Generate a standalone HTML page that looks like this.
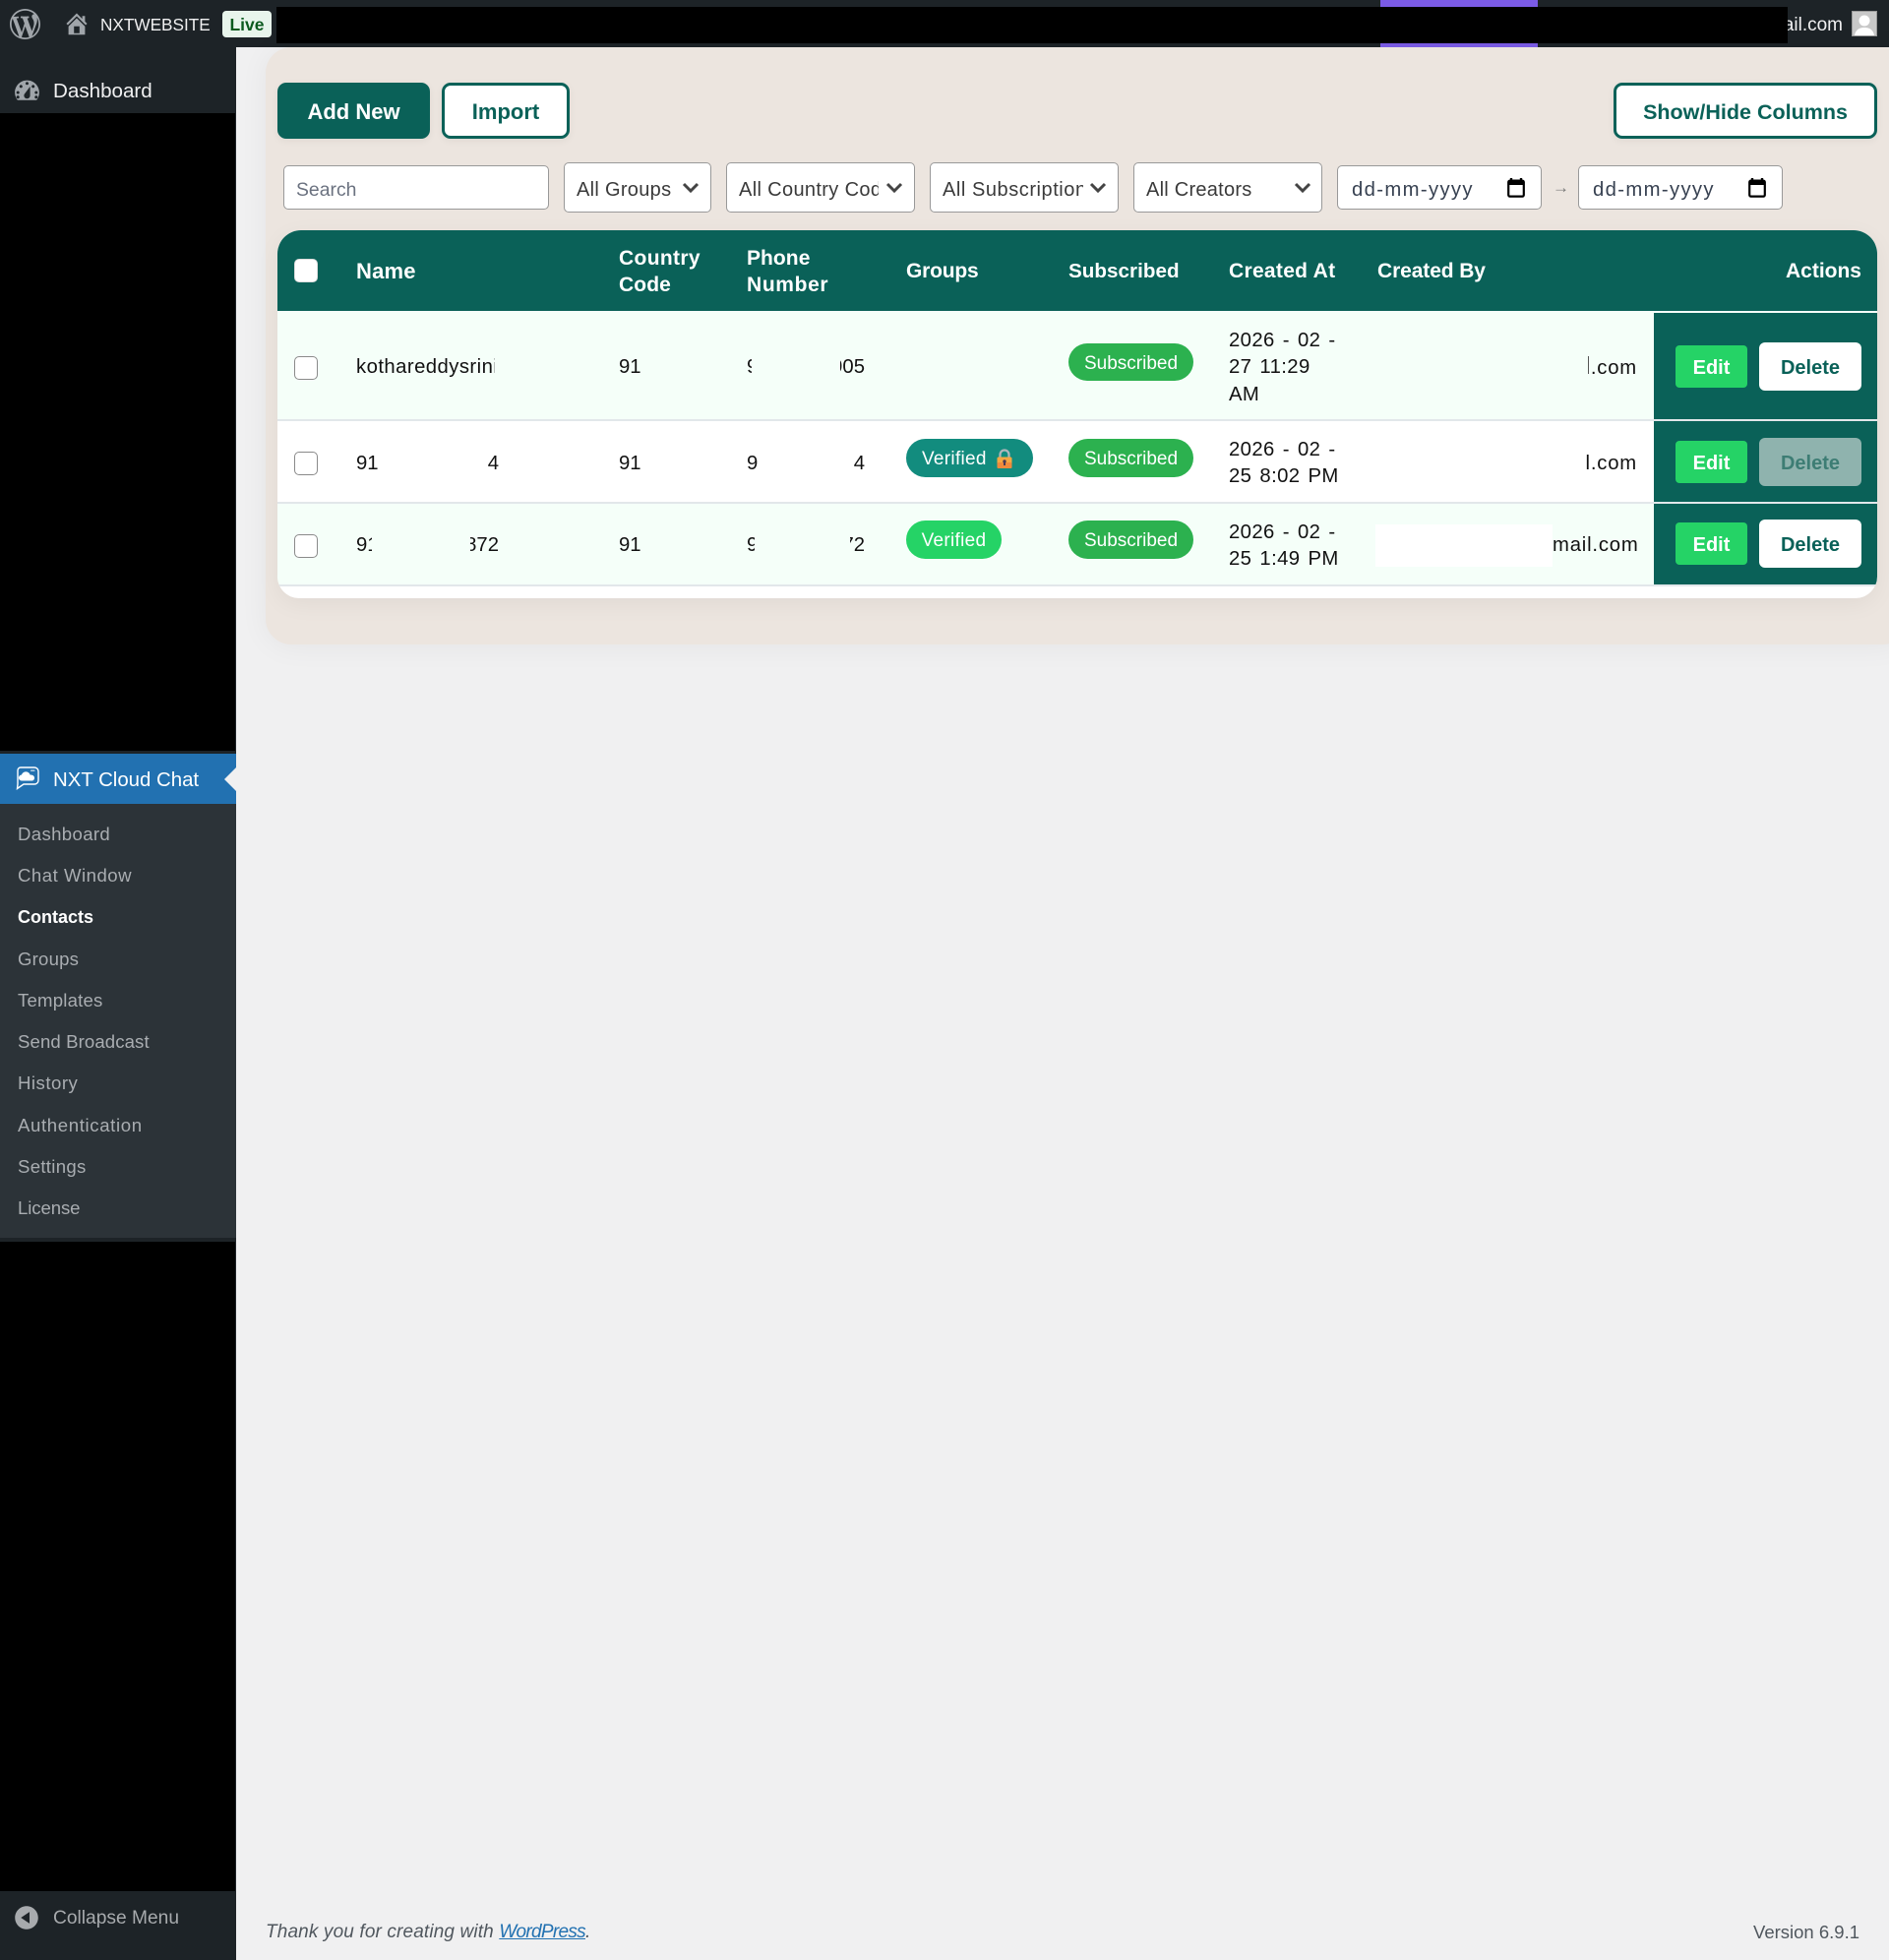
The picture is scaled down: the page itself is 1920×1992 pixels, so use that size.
<!DOCTYPE html>
<html lang="en"><head><meta charset="utf-8"><title>Contacts</title>
<style>
html,body{margin:0;padding:0;width:1920px;height:1992px;overflow:hidden;background:#f0f0f1;font-family:"Liberation Sans",sans-serif}
.a{position:absolute;box-sizing:border-box}
.t{position:absolute;white-space:nowrap;line-height:24px;height:24px;transform:translateY(1px)}
.clip{overflow:hidden}
.th{color:#fff;font-weight:bold;font-size:21px;letter-spacing:-.2px}
.td{color:#111;font-size:20.3px}
.dt{letter-spacing:.4px;word-spacing:2px}
.em{letter-spacing:.8px}
.sub{color:#a9adb1;font-size:18.6px;left:18px}
.btn{position:absolute;box-sizing:border-box;text-align:center;font-weight:bold;padding-top:1px}
.field{position:absolute;box-sizing:border-box;background:#fff;border:1px solid #999;border-radius:5px}
.cb{position:absolute;box-sizing:border-box;width:24px;height:24px;border:1.5px solid #8a8a8a;border-radius:5px;background:#fff}
.badge{position:absolute;box-sizing:border-box;height:39px;line-height:38px;padding-top:1.5px;border-radius:20px;color:#fff;font-size:19px;text-align:center}
</style></head><body>

<!-- sidebar -->
<div class="a" style="left:0;top:0;width:240px;height:1992px;background:#1d2327"></div>
<div class="a" style="left:0;top:115px;width:239px;height:648px;background:#000"></div>
<div class="a" style="left:0;top:766px;width:240px;height:51px;background:#2271b1"></div>
<div class="a" style="left:0;top:817px;width:240px;height:441px;background:#2c3338"></div>
<div class="a" style="left:0;top:1262px;width:239px;height:660px;background:#000"></div>

<!-- admin bar -->
<div class="a" style="left:0;top:0;width:1920px;height:48px;background:#1d2327"></div>
<div class="a" style="left:1403px;top:0;width:160px;height:48px;background:#7b5be6"></div>
<div class="a" style="left:281px;top:7px;width:1536px;height:37px;background:#000"></div>
<svg class="a" style="left:10px;top:9px" width="31" height="31" viewBox="0 0 20 20"><path fill="#a0a5aa" d="M20 10c0-5.51-4.49-10-10-10C4.48 0 0 4.49 0 10c0 5.52 4.48 10 10 10 5.51 0 10-4.48 10-10zM7.78 15.37L4.37 6.22c.55-.02 1.17-.08 1.17-.08.5-.06.44-1.13-.06-1.11 0 0-1.45.11-2.37.11-.18 0-.37 0-.58-.01C4.12 2.69 6.87 1.11 10 1.11c2.33 0 4.45.87 6.05 2.34-.68-.11-1.65.39-1.65 1.58 0 .74.45 1.36.9 2.1.35.61.55 1.36.55 2.46 0 1.49-1.4 5-1.4 5l-3.03-8.37c.54-.02.82-.17.82-.17.5-.05.44-1.25-.06-1.22 0 0-1.44.12-2.38.12-.87 0-2.33-.12-2.33-.12-.5-.03-.56 1.2-.06 1.22l.92.08 1.26 3.41zM17.41 10c.24-.64.74-1.87.43-4.25.7 1.29 1.05 2.71 1.05 4.25 0 3.29-1.73 6.24-4.4 7.78.97-2.59 1.94-5.2 2.92-7.78zM6.1 18.09C3.12 16.65 1.11 13.53 1.11 10c0-1.3.23-2.48.72-3.59C3.25 10.3 4.67 14.2 6.1 18.09zm4.03-6.63l2.58 6.98c-.86.29-1.76.45-2.71.45-.79 0-1.57-.11-2.29-.33.81-2.38 1.62-4.74 2.42-7.1z"/></svg>
<svg class="a" style="left:64px;top:10px" width="28" height="28" viewBox="0 0 20 20"><path fill="#a0a5aa" d="M16 8.5l1.53 1.53-1.06 1.06L10 4.62l-6.47 6.47-1.06-1.06L10 2.5l4 4v-2h2v4zm-6-2.46l6 5.99V18H4v-5.97zM12 17v-5H8v5h4z"/></svg>
<div class="t" style="left:102px;top:12px;color:#f0f0f1;font-size:17.2px">NXTWEBSITE</div>
<div class="a" style="left:226px;top:11px;width:50px;height:27px;background:#e8f5ec;border-radius:4px;color:#0b5a1e;font-size:17.5px;font-weight:bold;text-align:center;line-height:28px">Live</div>
<div class="a clip" style="left:1817px;top:14px;width:56px;height:24px;line-height:24px;color:#f0f0f1;font-size:19px;text-align:right;direction:rtl"><span style="direction:ltr;unicode-bidi:bidi-override">mail.com</span></div>
<svg class="a" style="left:1882px;top:11px" width="26" height="26" viewBox="0 0 26 26"><rect width="26" height="26" fill="#c8c8c8"/><rect x=".5" y=".5" width="25" height="25" fill="none" stroke="#9a9a9a"/><circle cx="13" cy="10" r="5.5" fill="#fff"/><path d="M3 25c1-6 5-8 10-8s9 2 10 8z" fill="#fff"/></svg>

<!-- sidebar items -->
<svg class="a" style="left:12px;top:77px" width="31" height="31" viewBox="0 0 20 20"><path fill="#a0a5aa" d="M3.76 16h12.48c1.1-1.37 1.76-3.11 1.76-5 0-4.42-3.58-8-8-8s-8 3.58-8 8c0 1.89.66 3.63 1.76 5zM10 4c.55 0 1 .45 1 1s-.45 1-1 1-1-.45-1-1 .45-1 1-1zM6 6c.55 0 1 .45 1 1s-.45 1-1 1-1-.45-1-1 .45-1 1-1zm8 0c.55 0 1 .45 1 1s-.45 1-1 1-1-.45-1-1 .45-1 1-1zm-5.37 5.55L12 7v6c0 1.1-.9 2-2 2s-2-.9-2-2c0-.57.24-1.08.63-1.45zM4 10c.55 0 1 .45 1 1s-.45 1-1 1-1-.45-1-1 .45-1 1-1zm12 0c.55 0 1 .45 1 1s-.45 1-1 1-1-.45-1-1 .45-1 1-1zm-12 3c.55 0 1 .45 1 1s-.45 1-1 1-1-.45-1-1 .45-1 1-1zm12 0c.55 0 1 .45 1 1s-.45 1-1 1-1-.45-1-1 .45-1 1-1z"/></svg>
<div class="t" style="left:54px;top:80px;color:#f0f0f1;font-size:20.6px">Dashboard</div>
<svg class="a" style="left:15px;top:778px" width="26" height="26" viewBox="0 0 26 26"><path d="M6 2h14a4 4 0 0 1 4 4v9a4 4 0 0 1-4 4H9l-6.5 4.5L3 19V5a3 3 0 0 1 3-3z" fill="none" stroke="#fff" stroke-width="1.4"/><path d="M7 15.5a3 3 0 0 1 0-6c.7-2.6 4-4.2 6.8-2.4 1 .6 1.6 1.5 1.8 2.5 2.6-.3 4.4 1.2 4.4 3.1 0 1.6-1.2 2.8-3 2.8z" fill="#fff"/><rect x="16" y="4.5" width="4.5" height="1.4" rx=".7" fill="#bcd6ec"/></svg>
<div class="t" style="left:54px;top:780px;color:#fff;font-size:20.4px">NXT Cloud Chat</div>
<div class="a" style="left:228px;top:780px;width:0;height:0;border-top:12px solid transparent;border-bottom:12px solid transparent;border-right:12px solid #f0f0f1"></div>
<div class="t sub" style="top:835px;letter-spacing:.35px">Dashboard</div>
<div class="t sub" style="top:877px;letter-spacing:.5px">Chat Window</div>
<div class="t" style="left:18px;top:919px;color:#fff;font-size:18px;font-weight:bold">Contacts</div>
<div class="t sub" style="top:962px;letter-spacing:.2px">Groups</div>
<div class="t sub" style="top:1004px;letter-spacing:.2px">Templates</div>
<div class="t sub" style="top:1046px;letter-spacing:.1px">Send Broadcast</div>
<div class="t sub" style="top:1088px;letter-spacing:.5px">History</div>
<div class="t sub" style="top:1131px;letter-spacing:.63px">Authentication</div>
<div class="t sub" style="top:1173px;letter-spacing:.3px">Settings</div>
<div class="t sub" style="top:1215px;letter-spacing:-.1px">License</div>
<svg class="a" style="left:12px;top:1934px" width="30" height="30" viewBox="0 0 20 20"><path fill="#a7aaad" d="M10 2.16c4.33 0 7.84 3.51 7.84 7.84s-3.51 7.84-7.84 7.84S2.16 14.33 2.16 10 5.71 2.16 10 2.16zm2 11.72V6.12L6.18 9.97z"/></svg>
<div class="t" style="left:54px;top:1937px;color:#a7aaad;font-size:19.2px">Collapse Menu</div>

<!-- panel -->
<div class="a" style="left:270px;top:48px;width:1670px;height:607px;background:#ece5df;border-radius:26px;box-shadow:0 2px 30px rgba(0,0,0,.05)"></div>

<!-- toolbar -->
<div class="btn" style="left:282px;top:84px;width:155px;height:57px;background:#0a6158;border-radius:9px;color:#fff;font-size:22px;line-height:58px;box-shadow:0 2px 8px rgba(0,0,0,.06)">Add New</div>
<div class="btn" style="left:449px;top:84px;width:130px;height:57px;background:#fff;border:3px solid #0a6158;border-radius:9px;color:#0a6158;font-size:22px;line-height:52px;box-shadow:0 2px 8px rgba(0,0,0,.06)">Import</div>
<div class="btn" style="left:1640px;top:84px;width:268px;height:57px;background:#fff;border:3px solid #0a6158;border-radius:9px;color:#0a6158;font-size:21.5px;line-height:52px;box-shadow:0 2px 8px rgba(0,0,0,.06)">Show/Hide Columns</div>

<div class="field" style="left:288px;top:168px;width:270px;height:45px"></div>
<div class="t" style="left:301px;top:180px;color:#6b7280;font-size:19.4px">Search</div>

<div class="field" style="left:573px;top:165px;width:150px;height:51px"></div>
<div class="t" style="left:586px;top:180px;color:#3a3a3a;font-size:20px;letter-spacing:.3px">All Groups</div>
<div class="field" style="left:738px;top:165px;width:192px;height:51px"></div>
<div class="t clip" style="left:751px;top:180px;width:142px;color:#3a3a3a;font-size:20px;letter-spacing:.35px">All Country Code</div>
<div class="field" style="left:945px;top:165px;width:192px;height:51px"></div>
<div class="t clip" style="left:958px;top:180px;width:143px;color:#3a3a3a;font-size:20px;letter-spacing:.55px">All Subscription</div>
<div class="field" style="left:1152px;top:165px;width:192px;height:51px"></div>
<div class="t" style="left:1165px;top:180px;color:#3a3a3a;font-size:20px;letter-spacing:.25px">All Creators</div>
<svg class="a" style="left:0;top:0" width="1400" height="220" fill="none" stroke="#444" stroke-width="3"><path d="M695 187l7 7 7-7M902 187l7 7 7-7M1109 187l7 7 7-7M1317 187l7 7 7-7"/></svg>

<div class="field" style="left:1359px;top:168px;width:208px;height:45px"></div>
<div class="t" style="left:1374px;top:180px;color:#374151;font-size:20.3px;letter-spacing:1.35px">dd-mm-yyyy</div>
<svg class="a" style="left:1532px;top:181px" width="18" height="20" viewBox="0 0 18 20"><path d="M4 0v3M14 0v3" stroke="#000" stroke-width="2.4"/><rect x="1.2" y="2.6" width="15.6" height="16" rx="1.5" fill="none" stroke="#000" stroke-width="2.2"/><rect x="1.2" y="2.6" width="15.6" height="4.4" fill="#000"/></svg>
<div class="t" style="left:1578px;top:178px;color:#777;font-size:17px">→</div>
<div class="field" style="left:1604px;top:168px;width:208px;height:45px"></div>
<div class="t" style="left:1619px;top:180px;color:#374151;font-size:20.3px;letter-spacing:1.35px">dd-mm-yyyy</div>
<svg class="a" style="left:1777px;top:181px" width="18" height="20" viewBox="0 0 18 20"><path d="M4 0v3M14 0v3" stroke="#000" stroke-width="2.4"/><rect x="1.2" y="2.6" width="15.6" height="16" rx="1.5" fill="none" stroke="#000" stroke-width="2.2"/><rect x="1.2" y="2.6" width="15.6" height="4.4" fill="#000"/></svg>

<!-- table -->
<div class="a" style="left:282px;top:234px;width:1626px;height:374px;background:#fff;border-radius:24px 24px 22px 22px;box-shadow:0 6px 24px rgba(0,0,0,.05);overflow:hidden">
  <div class="a" style="left:0;top:0;width:1626px;height:82px;background:#0a6158"></div>
  <div class="a" style="left:0;top:82px;width:1626px;height:110px;background:#f5fff9"></div>
  <div class="a" style="left:0;top:192px;width:1626px;height:2px;background:#e2e7ea"></div>
  <div class="a" style="left:0;top:276px;width:1626px;height:2px;background:#e2e7ea"></div>
  <div class="a" style="left:0;top:278px;width:1626px;height:82px;background:#f5fff9"></div>
  <div class="a" style="left:0;top:360px;width:1626px;height:2px;background:#e2e7ea"></div>
  <div class="a" style="left:1399px;top:84px;width:227px;height:108px;background:#0a6158"></div>
  <div class="a" style="left:1399px;top:194px;width:227px;height:82px;background:#0a6158"></div>
  <div class="a" style="left:1399px;top:278px;width:227px;height:82px;background:#0a6158"></div>
</div>

<!-- header -->
<div class="cb" style="left:299px;top:263px;border-color:#ddd"></div>
<div class="t th" style="left:362px;top:263px;font-size:22px;letter-spacing:.2px">Name</div>
<div class="t th" style="left:629px;top:250px;letter-spacing:.35px">Country</div>
<div class="t th" style="left:629px;top:277px;letter-spacing:.1px">Code</div>
<div class="t th" style="left:759px;top:250px;letter-spacing:.05px">Phone</div>
<div class="t th" style="left:759px;top:277px;letter-spacing:.65px">Number</div>
<div class="t th" style="left:921px;top:263px">Groups</div>
<div class="t th" style="left:1086px;top:263px;font-size:20.6px;letter-spacing:.05px">Subscribed</div>
<div class="t th" style="left:1249px;top:263px;letter-spacing:.3px">Created At</div>
<div class="t th" style="left:1400px;top:263px;letter-spacing:-.1px">Created By</div>
<div class="t th" style="right:28px;top:263px;letter-spacing:0">Actions</div>

<!-- row 1 -->
<div class="cb" style="left:299px;top:362px"></div>
<div class="t td clip" style="left:362px;top:360px;width:141px;letter-spacing:.45px">kothareddysrinivas</div>
<div class="t td" style="left:629px;top:360px">91</div>
<div class="t td clip" style="left:759px;top:360px;width:5px">9</div>
<div class="t td clip" style="left:854px;top:360px;width:25px;direction:rtl"><span style="direction:ltr;unicode-bidi:bidi-override">905</span></div>
<div class="badge" style="left:1086px;top:349px;width:127px;height:38px;background:#2cb14f">Subscribed</div>
<div class="t td dt" style="left:1249px;top:333px">2026 - 02 -</div>
<div class="t td dt" style="left:1249px;top:360px">27 11:29</div>
<div class="t td dt" style="left:1249px;top:388px">AM</div>
<div class="t td em" style="right:256px;top:361px">.com</div>
<div class="a" style="left:1614px;top:362px;width:1px;height:18px;background:#555"></div>
<div class="btn" style="left:1703px;top:351px;width:73px;height:43px;background:#25d366;border-radius:4px;color:#fff;font-size:20px;line-height:45px">Edit</div>
<div class="btn" style="left:1788px;top:348px;width:104px;height:49px;background:#fff;border-radius:6px;color:#0a6158;font-size:20px;line-height:51px">Delete</div>

<!-- row 2 -->
<div class="cb" style="left:299px;top:459px"></div>
<div class="t td" style="left:362px;top:458px">91</div>
<div class="t td" style="right:1413px;top:458px">4</div>
<div class="t td" style="left:629px;top:458px">91</div>
<div class="t td" style="left:759px;top:458px">9</div>
<div class="t td" style="right:1041px;top:458px">4</div>
<div class="badge" style="left:921px;top:446px;width:129px;background:#128c7e;text-align:left;padding-left:16px;letter-spacing:.3px">Verified</div>
<svg class="a" style="left:1012px;top:456px" width="18" height="21" viewBox="0 0 18 21"><path d="M4.5 9V6a4.5 4.5 0 0 1 9 0v3" fill="none" stroke="#b0b6bb" stroke-width="2.2"/><rect x="1.5" y="8.5" width="15" height="11.5" rx="1.5" fill="#f5a742"/><rect x="1.5" y="14" width="15" height="6" rx="1.5" fill="#ee8a3c"/><circle cx="9" cy="13" r="1.7" fill="#4a3a55"/><rect x="8" y="13" width="2" height="4" fill="#4a3a55"/></svg>
<div class="badge" style="left:1086px;top:446px;width:127px;background:#2cb14f">Subscribed</div>
<div class="t td dt" style="left:1249px;top:444px">2026 - 02 -</div>
<div class="t td dt" style="left:1249px;top:471px">25 8:02 PM</div>
<div class="t td em" style="right:256px;top:458px">l.com</div>
<div class="btn" style="left:1703px;top:448px;width:73px;height:43px;background:#25d366;border-radius:4px;color:#fff;font-size:20px;line-height:45px">Edit</div>
<div class="btn" style="left:1788px;top:445px;width:104px;height:49px;background:#8fb3ae;border-radius:6px;color:#3d7d74;font-size:20px;line-height:51px">Delete</div>

<!-- row 3 -->
<div class="cb" style="left:299px;top:543px"></div>
<div class="t td clip" style="left:362px;top:541px;width:15.5px">91</div>
<div class="t td clip" style="left:478px;top:541px;width:29px;text-align:right;direction:rtl"><span style="direction:ltr;unicode-bidi:bidi-override">872</span></div>
<div class="t td" style="left:629px;top:541px">91</div>
<div class="t td clip" style="left:759px;top:541px;width:8px">9</div>
<div class="t td clip" style="left:864px;top:541px;width:15px;direction:rtl"><span style="direction:ltr;unicode-bidi:bidi-override">72</span></div>
<div class="badge" style="left:921px;top:529px;width:97px;background:#25d366;letter-spacing:.3px">Verified</div>
<div class="badge" style="left:1086px;top:529px;width:127px;background:#2cb14f">Subscribed</div>
<div class="t td dt" style="left:1249px;top:528px">2026 - 02 -</div>
<div class="t td dt" style="left:1249px;top:555px">25 1:49 PM</div>
<div class="a" style="left:1398px;top:533px;width:180px;height:43px;background:#fff"></div>
<div class="t td clip em" style="left:1578px;top:541px;width:87px;text-align:right">mail.com</div>
<div class="btn" style="left:1703px;top:531px;width:73px;height:43px;background:#25d366;border-radius:4px;color:#fff;font-size:20px;line-height:45px">Edit</div>
<div class="btn" style="left:1788px;top:528px;width:104px;height:49px;background:#fff;border-radius:6px;color:#0a6158;font-size:20px;line-height:51px">Delete</div>

<!-- footer -->
<div class="t" style="left:270px;top:1951px;color:#50575e;font-size:19px;font-style:italic;letter-spacing:.14px">Thank you for creating with <a style="color:#2271b1;text-decoration:underline;letter-spacing:-.7px">WordPress</a>.</div>
<div class="t" style="right:30px;top:1951px;color:#50575e;font-size:18.5px">Version 6.9.1</div>

</body></html>
